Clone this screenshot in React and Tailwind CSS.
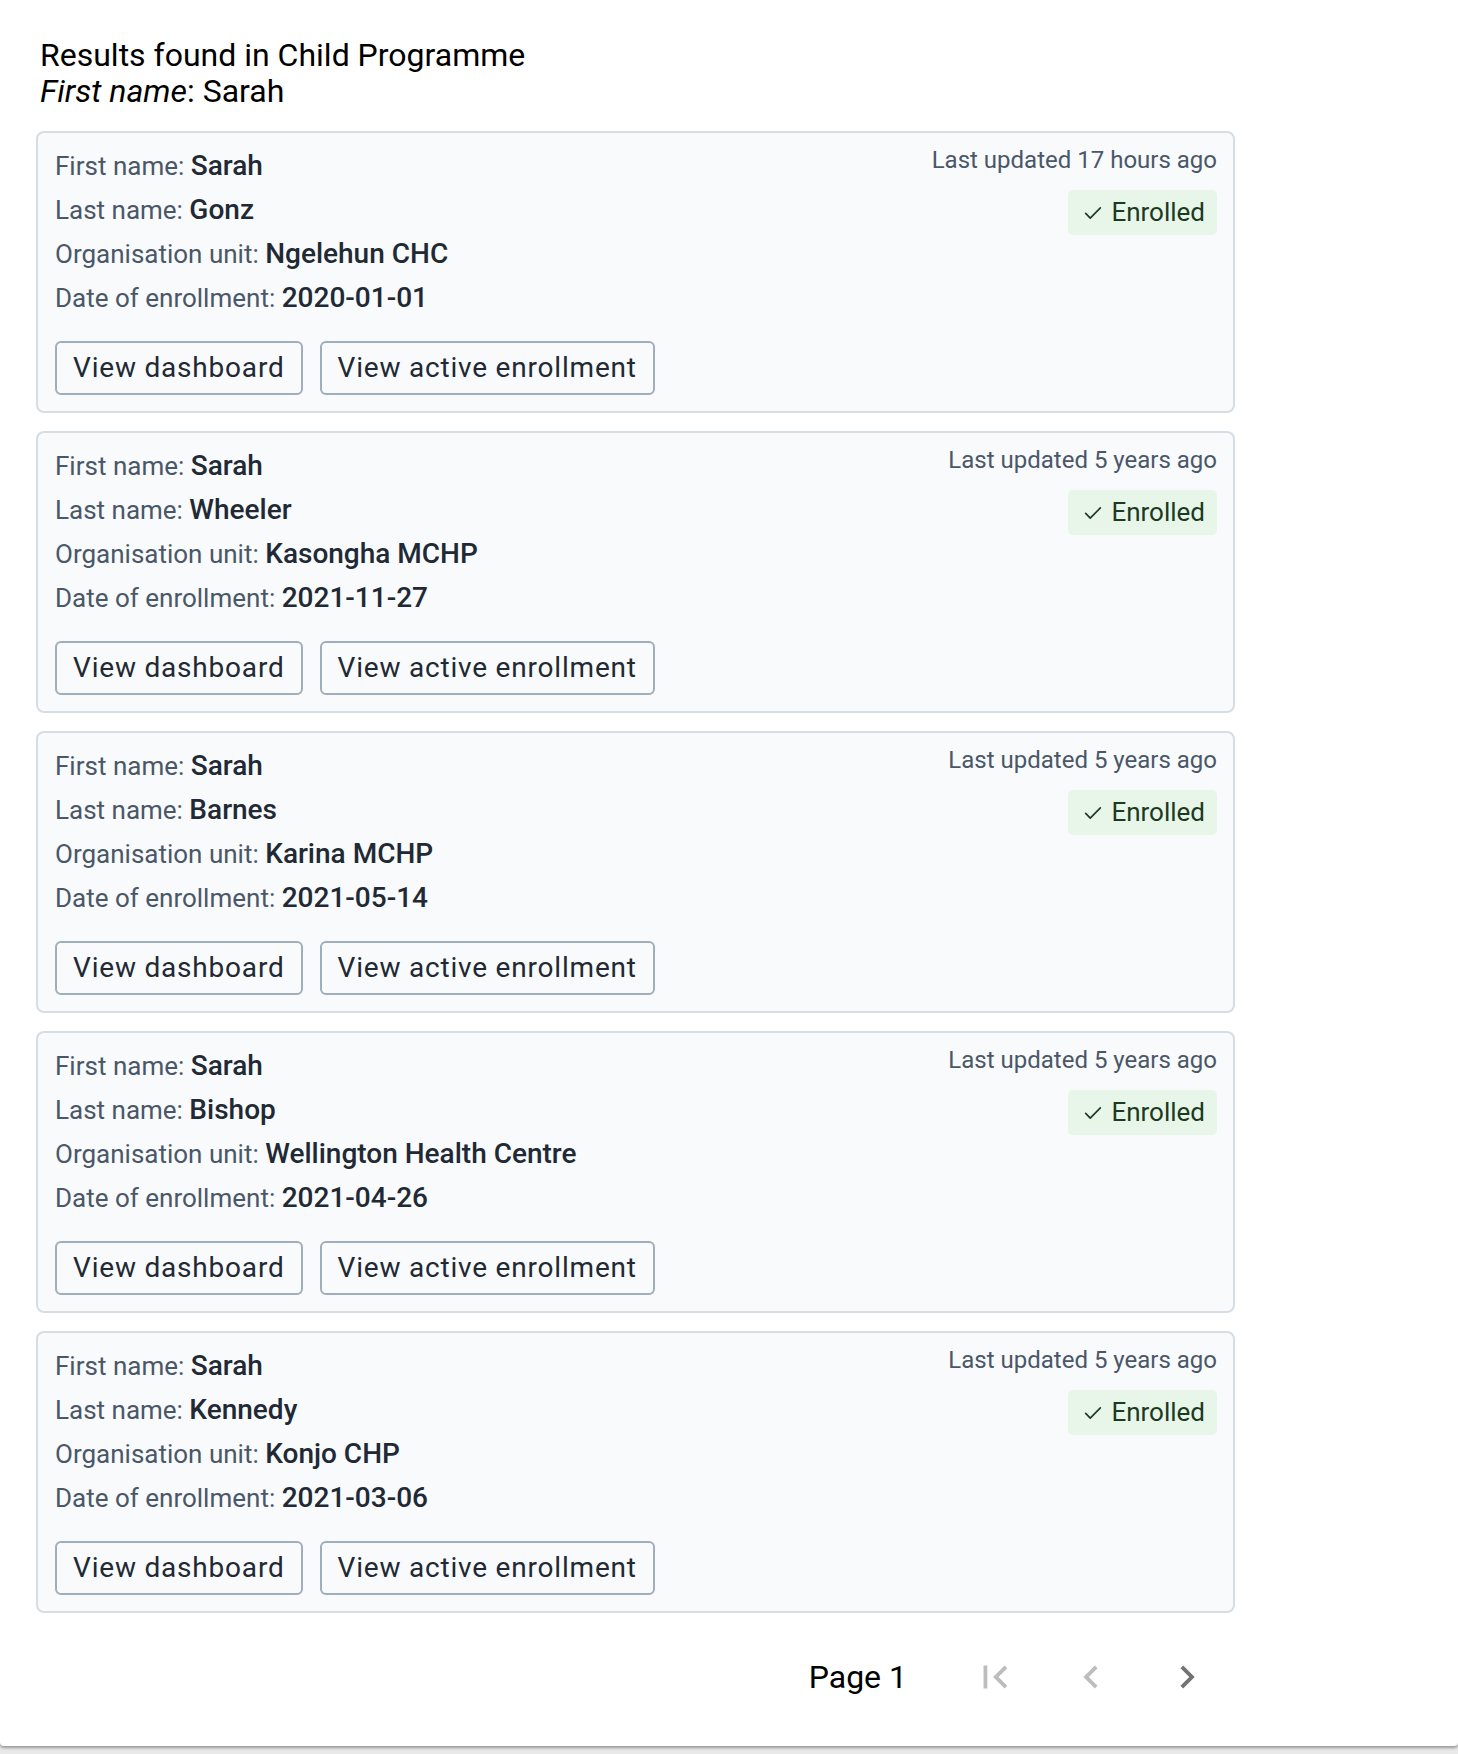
const results = [
  { first: 'Sarah', last: 'Gonz', org: 'Ngelehun CHC', date: '2020-01-01', updated: '17 hours ago' },
  { first: 'Sarah', last: 'Wheeler', org: 'Kasongha MCHP', date: '2021-11-27', updated: '5 years ago' },
  { first: 'Sarah', last: 'Barnes', org: 'Karina MCHP', date: '2021-05-14', updated: '5 years ago' },
  { first: 'Sarah', last: 'Bishop', org: 'Wellington Health Centre', date: '2021-04-26', updated: '5 years ago' },
  { first: 'Sarah', last: 'Kennedy', org: 'Konjo CHP', date: '2021-03-06', updated: '5 years ago' },
]

function Field({ label, value }) {
  return (
    <div className="h-[44px] flex items-center">
      <span className="text-[#4a5768]">{label}:&nbsp;</span>
      <span className="text-[#212934] text-[28px] font-medium">{value}</span>
    </div>
  )
}

function ResultCard({ item }) {
  return (
    <div className="border-2 border-[#d5dde5] rounded-[8px] bg-[#f8fafc] pt-[11px] pb-[16px] pl-[17px] pr-[16px]">
      <div className="flex justify-between">
        <div className="text-[26px] leading-[44px]">
          <Field label="First name" value={item.first} />
          <Field label="Last name" value={item.last} />
          <Field label="Organisation unit" value={item.org} />
          <Field label="Date of enrollment" value={item.date} />
        </div>
        <div className="flex flex-col items-end">
          <div className="text-[24px] leading-[32px] text-[#4a5768]">Last updated {item.updated}</div>
          <div className="mt-[14px] h-[45px] flex items-center gap-[7px] pl-[14px] pr-[12px] rounded-[5px] bg-[#e8f5e9] text-[#1b3a1e] text-[26px]">
            <svg viewBox="0 0 24 24" fill="none" stroke="currentColor" strokeWidth="1.8" className="w-[22px] h-[22px]">
              <path d="M4 12.5l5 5L20 6.5" strokeLinecap="round" strokeLinejoin="round" />
            </svg>
            <span>Enrolled</span>
          </div>
        </div>
      </div>
      <div className="mt-[21px] flex gap-[17px]">
        <button className="h-[54px] px-[16px] border-2 border-[#a0adba] rounded-[6px] bg-[#f9fafb] text-[28px] tracking-[0.8px] text-[#212934]">
          View dashboard
        </button>
        <button className="h-[54px] px-[16px] border-2 border-[#a0adba] rounded-[6px] bg-[#f9fafb] text-[28px] tracking-[0.8px] text-[#212934]">
          View active enrollment
        </button>
      </div>
    </div>
  )
}

export default function App() {
  return (
    <div className="min-h-[1754px] bg-[#e9e9e9] font-[Roboto,'Liberation_Sans',sans-serif]">
      <div className="h-[1746px] bg-white rounded-b-[4px] shadow-[0_2px_3px_rgba(0,0,0,0.35)] pl-[36px] pt-[37px]">
        <div className="w-[1199px]">
          <div className="pl-[4px] text-[32px] leading-[36px] text-black">
            <div>Results found in Child Programme</div>
            <div>
              <i>First name</i>: Sarah
            </div>
          </div>
          <div className="mt-[22px] flex flex-col gap-[18px]">
            {results.map((r) => (
              <ResultCard key={r.last} item={r} />
            ))}
          </div>
          <div className="mt-[40px] h-[48px] flex items-center justify-end">
            <span className="text-[32px] text-black mr-[40px]">Page 1</span>
            <button className="w-[96px] flex justify-center text-[#bdbdbd]">
              <svg viewBox="0 0 24 24" fill="currentColor" className="w-[46px] h-[46px]">
                <path d="M18.41 16.59L13.82 12l4.59-4.59L17 6l-6 6 6 6zM6 6h2v12H6z" />
              </svg>
            </button>
            <button className="w-[96px] flex justify-center text-[#bdbdbd]">
              <svg viewBox="0 0 24 24" fill="currentColor" className="w-[46px] h-[46px]">
                <path d="M15.41 7.41L14 6l-6 6 6 6 1.41-1.41L10.83 12z" />
              </svg>
            </button>
            <button className="w-[96px] flex justify-center text-[#737373]">
              <svg viewBox="0 0 24 24" fill="currentColor" className="w-[46px] h-[46px]">
                <path d="M10 6L8.59 7.41 13.17 12l-4.58 4.59L10 18l6-6z" />
              </svg>
            </button>
          </div>
        </div>
      </div>
    </div>
  )
}
